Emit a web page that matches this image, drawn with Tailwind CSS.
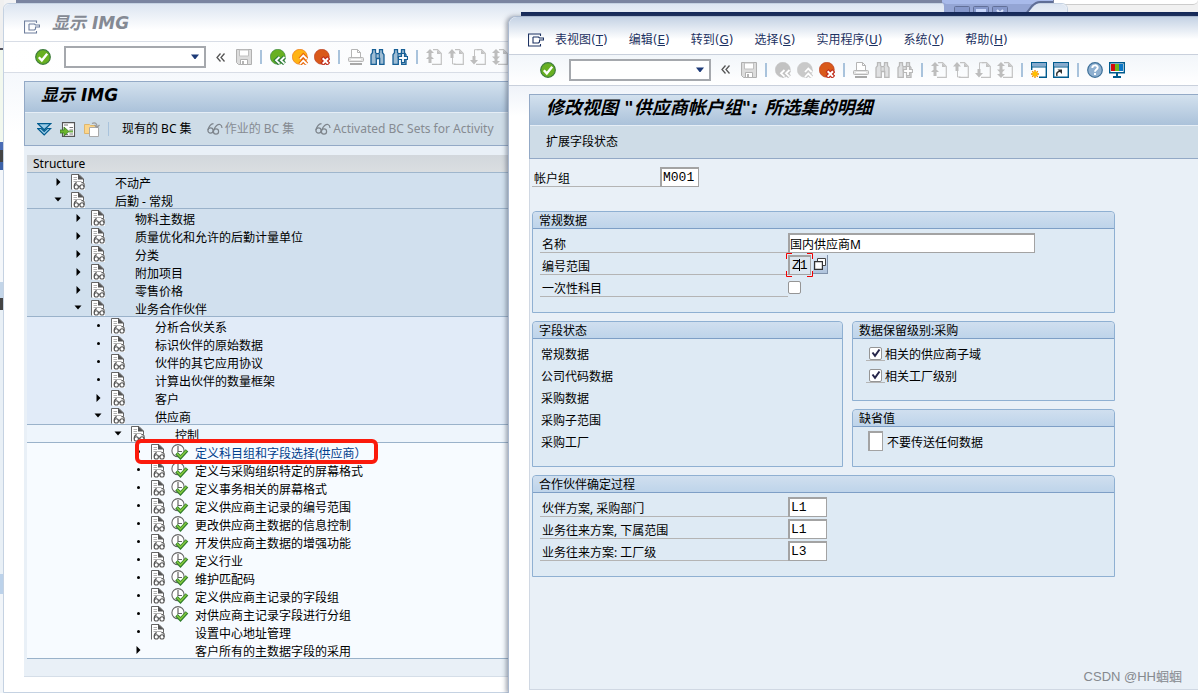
<!DOCTYPE html>
<html lang="zh-CN">
<head>
<meta charset="utf-8">
<meta name="viewport" content="width=device-width, initial-scale=1">
<title>显示 IMG</title>
<script src="https://cdn.jsdelivr.net/npm/@tailwindcss/browser@4"></script>
</head>
<body class="bg-[#f3f3f4] font-['Noto_Sans','Noto_Sans_CJK_SC',sans-serif] text-xs text-black">

<!-- Icon sprite -->
<svg class="hidden" aria-hidden="true">
  <symbol id="i-window" viewBox="0 0 16 14"><path d="M12.500 3V1H.5v12h12v-2M5 4h5.500l1 1H15.500v2H11M5 4v6h5.500l1-1V7.500" fill="none" stroke="currentColor" stroke-width="1.100"/></symbol>
  <symbol id="i-ok" viewBox="0 0 16 16"><circle cx="8" cy="8" r="7.300" fill="#68b021" stroke="#3d7c3c" stroke-width="1.200"/><path d="M3.800 8.200l3 3.200 5.400-6.600" fill="none" stroke="#fff" stroke-width="2.400"/></symbol>
  <symbol id="i-save" viewBox="0 0 16 16"><path d="M.5.5h15v15h-13l-2-2z" fill="#dcdcdc" stroke="#b0b0b0"/><path d="M3.500 1h9v6h-9z" fill="#fff" stroke="#c0c0c0"/><path d="M4.500 10.500h7v5h-7z" fill="#fff" stroke="#b0b0b0"/><path d="M6 12h2v3H6z" fill="#b5b5b5"/></symbol>
  <symbol id="i-back" viewBox="0 0 16 16"><circle cx="7.800" cy="7.800" r="7.500" fill="var(--face,currentColor)" stroke="currentColor" stroke-width=".6"/><path d="M9.500 8L6 11.300 9.500 14.700M14.500 8L11 11.300 14.500 14.700" fill="none" stroke="currentColor" stroke-width="4"/><path d="M9.500 8L6 11.300 9.500 14.700M14.500 8L11 11.300 14.500 14.700" fill="none" stroke="#fff" stroke-width="1.800"/></symbol>
  <symbol id="i-up" viewBox="0 0 16 16"><circle cx="7.800" cy="7.800" r="7.500" fill="currentColor" stroke="var(--rim,currentColor)" stroke-width=".6"/><path d="M8 10l3.300-3.500L14.700 10M8 15l3.300-3.500L14.700 15" fill="none" stroke="var(--rim,currentColor)" stroke-width="4"/><path d="M8 10l3.300-3.500L14.700 10M8 15l3.300-3.500L14.700 15" fill="none" stroke="#fff" stroke-width="1.800"/></symbol>
  <symbol id="i-exit" viewBox="0 0 16 16"><circle cx="7.800" cy="7.800" r="7.500" fill="#d9591a" stroke="#b5381c" stroke-width=".6"/><path d="M8 8.500l6.800 6.800M14.800 8.500L8 15.300" stroke="#c02d1c" stroke-width="4.400"/><path d="M8.700 9.300l5.300 5.300M14 9.300l-5.300 5.300" stroke="#fff" stroke-width="2"/></symbol>
  <symbol id="i-print" viewBox="0 0 16 16"><path d="M3.500 8V.500h6l3 3V8" fill="#fff" stroke="#b5b5b5"/><path d="M9.500.500v3h3" fill="none" stroke="#b5b5b5"/><rect x=".5" y="8.500" width="15" height="4" rx="1" fill="#e4e4e4" stroke="#b5b5b5"/><path d="M3 10.500h10" stroke="#fff"/><path d="M2 15h12" stroke="#a8a8a8" stroke-width="2"/></symbol>
  <symbol id="i-find" viewBox="0 0 16 16"><path d="M2.500.7h3v3l1 1h2l1-1v-3h3v3l1.500 2v9.600H9.700V9.500h-3.400v5.800H1V5.700l1.500-2z" fill="currentColor" fill-opacity=".4" stroke="currentColor" stroke-width="1.300"/><path d="M6 5v4M9.300 5v4" stroke="currentColor"/></symbol>
  <symbol id="i-findnext" viewBox="0 0 16 16"><use href="#i-find"/><path d="M9.500 4.500h3v3h3v3h-3v3h-3v-3h-3v-3h3z" fill="#fff" stroke="currentColor" stroke-width="1.200"/></symbol>
  <symbol id="i-page" viewBox="0 0 16 16"><path d="M7 .7h4.500L15.300 4.500v10.800H6" fill="none" stroke="#c2c2c2" stroke-width="1.200"/><path d="M11 1v4h4z" fill="#c2c2c2"/></symbol>
  <symbol id="i-first" viewBox="0 0 16 16"><use href="#i-page"/><path d="M4 0l4 4H5.500v3H2.500V4H0zM4 6l4 4H5.500v4H2.500v-4H0z" fill="#bdbdbd"/></symbol>
  <symbol id="i-prev" viewBox="0 0 16 16"><use href="#i-page"/><path d="M4 0l4 4.500H5.500V9h-3V4.500H0z" fill="#bdbdbd"/><path d="M4.500 9v6h3" fill="none" stroke="#c2c2c2"/></symbol>
  <symbol id="i-next" viewBox="0 0 16 16"><use href="#i-page"/><path d="M4.500 7V.700h4" fill="none" stroke="#c2c2c2"/><path d="M2.500 7h3v4H8l-4 4.500L0 11h2.500z" fill="#bdbdbd"/></symbol>
  <symbol id="i-last" viewBox="0 0 16 16"><use href="#i-page"/><path d="M4 0l4 4H5.500v3.500H8l-4 4 -4-4h2.500V4H0zM2.500 9h3v3H8l-4 4-4-4h2.500z" fill="#bdbdbd"/></symbol>
  <symbol id="i-newsession" viewBox="0 0 16 16"><path d="M.7.7h14.600v14.600H.7z" fill="#fff" stroke="#005b8e" stroke-width="1.400"/><path d="M1 1h14v3.500H1z" fill="#86aacd"/><path d="M1 5h14" stroke="#005b8e"/><path d="M0 8h8v8H0z" fill="#fff"/><path d="M4 8v8M0 12h8M1.200 9.200l5.600 5.600M6.800 9.200l-5.600 5.600" stroke="#f08c00" stroke-width="1.300"/><circle cx="4" cy="12" r="2.400" fill="#ffc000"/></symbol>
  <symbol id="i-shortcut" viewBox="0 0 16 16"><path d="M.7.7h14.600v14.600H.7z" fill="#fff" stroke="#005b8e" stroke-width="1.400"/><path d="M1 1h14v3.500H1z" fill="#86aacd"/><path d="M1 5h14" stroke="#005b8e"/><path d="M4 14c-1-3 .5-4.500 3.500-5" fill="none" stroke="#333" stroke-width="1.500"/><path d="M4.500 7.500H9V12z" fill="#333"/></symbol>
  <symbol id="i-help" viewBox="0 0 16 16"><circle cx="8" cy="8" r="7.300" fill="#8fb0d0" stroke="#3d7099" stroke-width="1.200"/><path d="M5.300 6c0-3.600 5.400-3.400 5.400-.4 0 2-2.700 2-2.700 4.200M8 11v2" fill="none" stroke="#fff" stroke-width="1.900"/></symbol>
  <symbol id="i-layout" viewBox="0 0 16 16"><path d="M.7.7h14.600v10H.7z" fill="#fff" stroke="#005b8e" stroke-width="1.400"/><path d="M2 2h4v7H2z" fill="#d40a0a"/><path d="M6 2h4v7H6z" fill="#6fb61c"/><path d="M10 2h4v7h-4z" fill="#0b78c8"/><path d="M8 11v4M4 15h8" stroke="#005b8e" stroke-width="2"/></symbol>
  <symbol id="i-expand" viewBox="0 0 15 13"><path d="M.7 5.500h3.500l3 3 3-3h3.500L7.200 12z" fill="#9acbe6" stroke="#005b8e" stroke-width="1.200"/><path d="M.8.700h12.900L7.200 6.800z" fill="#9acbe6" stroke="#005b8e" stroke-width="1.200"/></symbol>
  <symbol id="i-position" viewBox="0 0 16 15"><path d="M2.500.600h12v13.800h-12z" fill="#fff" stroke="#555" stroke-width="1.100"/><path d="M4 3h4M4 12.500h4M9.500 5.500h3.500M9.500 8h3.500M9.500 12h3.500" stroke="#777"/><path d="M9 9.500h4" stroke="#70b04a" stroke-width="2"/><path d="M0 8h4V5l5 4.500L4 14v-3H0z" fill="#6bb52a" stroke="#397a24" stroke-width=".8"/></symbol>
  <symbol id="i-copy" viewBox="0 0 16 15"><path d="M.5 2.500h5l1 1h5v8H.5z" fill="#fbd58a" stroke="#dfb66c"/><path d="M5.500 5.500h9v9h-9z" fill="#fff" stroke="#aaa"/><path d="M8 1.500c3-1.500 5 0 5 3M10.500 3l2.500 2.500L15.500 3" fill="none" stroke="#999" stroke-width="1.200"/></symbol>
  <symbol id="i-glasses" viewBox="0 0 16 12"><g fill="none" stroke="#7d848b" stroke-width="1.200"><circle cx="3.500" cy="7.500" r="2.600"/><circle cx="9" cy="8.500" r="2.600"/><path d="M1 7C2 3 4 1 6.500.700M7 7C8 3 11 1 13 1.500c1.500.500 2 2 2 3.500M6 7.500l1 .5"/></g></symbol>
  <symbol id="i-doc" viewBox="0 0 14 16"><path d="M.5 15.500V.500H8L12.500 5v6" fill="#fff" stroke="#666"/><path d="M7 0v5.500h6z" fill="#555"/><path d="M2.500 3.500h3.500M2.500 5.500h3.500M2.500 7.500h8" stroke="#b0b0b0"/><path d="M2 8.500h12V16H2z" fill="#fff"/><g fill="none" stroke="#555" stroke-width="1.100"><circle cx="5.300" cy="12.900" r="2.100"/><circle cx="11" cy="12.900" r="2.100"/><path d="M3.200 12.500c0-2.500.800-3.500 2.600-3.900M7.400 12.400h1.500M13.100 12.900v-3c-.3-1.100-1.500-1.400-2.800-1.100"/></g></symbol>
  <symbol id="i-exec" viewBox="0 0 18 16"><circle cx="7" cy="6.700" r="6.100" fill="#fff" stroke="#666" stroke-width="1.100"/><path d="M7 2v5.500h4" fill="none" stroke="#666" stroke-width="1.200"/><path d="M5.500 9.200l4 4.200 6.500-7" fill="none" stroke="#2f7d2c" stroke-width="3.500"/><path d="M6 9.600l3.500 3.500 6-6.600" fill="none" stroke="#83c83c" stroke-width="1.500"/></symbol>
  <symbol id="i-right" viewBox="0 0 14 14"><path d="M5.500 3L9.500 7l-4 4z"/></symbol>
  <symbol id="i-down" viewBox="0 0 14 14"><path d="M3.500 4.500h7L7 8.500z"/></symbol>
  <symbol id="i-dot" viewBox="0 0 14 14"><circle cx="7.500" cy="6.500" r="1.500"/></symbol>
  <symbol id="i-caret" viewBox="0 0 10 6"><path d="M1 .500h8L5.500 5h-1z" fill="#1d3a78"/></symbol>
  <symbol id="i-collapse" viewBox="0 0 10 9"><path d="M4.500.500L1 4.500l3.500 4M8.500.500L5 4.500l3.500 4" fill="none" stroke="#555" stroke-width="1.300"/></symbol>
  <symbol id="i-values" viewBox="0 0 12 12"><path d="M3.500.500h8v7h-8z" fill="#fff" stroke="#444"/><path d="M.6 3.600h7.800v7.800H.600z" fill="#fff" stroke="#333" stroke-width="1.200"/></symbol>
  <symbol id="i-tick" viewBox="0 0 12 12"><path d="M2.500 5.500L5 8.800 9.500 2.500" fill="none" stroke="#26264a" stroke-width="2"/></symbol>
</svg>

<div class="relative min-h-screen overflow-hidden">

  <!-- Desktop behind both windows -->
  <div class="absolute inset-y-0 left-0 flex w-1 flex-col bg-[#f1f5f9]">
    <span class="h-12 bg-[#f0f0f0]"></span><span class="h-0.5 bg-[#55555f]"></span><span class="h-23 bg-[#f2f8ee]"></span><span class="h-2 bg-[#4a6cb5]"></span><span class="h-3 bg-[#444]"></span><span class="h-2 bg-[#3d62a8]"></span><span class="h-28 bg-[#f4f7fa]"></span><span class="h-4 bg-[#c3d5e8]"></span><span class="h-3 bg-[#444]"></span><span class="h-66 bg-[#e9f0f6]"></span><span class="h-5 bg-[#bcd2ea]"></span>
  </div>
  <div class="absolute left-4 right-36 top-0 h-[3px] bg-[#7a84a0]"></div>
  <div class="absolute right-0 top-0 h-4 w-36 bg-[#f1f1f1]"></div>
  <div class="absolute right-0 top-0 h-[5px] w-36 rounded-br-full border-b border-[#ccc] bg-white"></div>

  <!-- Window: 显示 IMG -->
  <main class="absolute bottom-0 left-[3px] right-[130px] top-[3px] rounded-t-md border border-[#c5d2e2] bg-white">
    <header class="flex h-[38px] items-center gap-3 rounded-t-md border-b border-[#d8dde6] bg-linear-to-b from-[#dce5f1] to-white to-70% pl-5 text-[#858a94]">
      <svg class="mt-2 h-3.5 w-4 text-[#6f7f9d]"><use href="#i-window"/></svg>
      <h1 class="font-['DejaVu_Sans','Noto_Sans_CJK_SC',sans-serif] text-[17px] font-bold italic leading-5">显示 IMG</h1>
    </header>

    <div class="flex h-[31px] items-center gap-1.5 border-b border-[#d8dde6] bg-linear-to-r from-white to-[#f4f7fb] pl-[31px]">
      <button aria-label="确认" class="mr-[7px] size-4"><svg class="size-4"><use href="#i-ok"/></svg></button>
      <div class="flex h-[22px] w-[142px] items-center border-2 border-[#a5a8ad] bg-white pr-1">
        <input aria-label="命令" class="min-w-0 flex-1 px-1 outline-none"><button aria-label="历史命令"><svg class="h-1.5 w-2.5"><use href="#i-caret"/></svg></button>
      </div>
      <button aria-label="折叠" class="mx-1 h-[9px] w-2.5"><svg class="h-[9px] w-2.5"><use href="#i-collapse"/></svg></button>
      <button aria-label="保存" class="size-4"><svg class="size-4"><use href="#i-save"/></svg></button>
      <span class="mx-0.5 h-3.5 w-0.5 bg-[#a9c3dc]"></span>
      <button aria-label="返回" class="size-4 text-[#2f7d3c] [--face:#68b021]"><svg class="size-4"><use href="#i-back"/></svg></button>
      <button aria-label="退出" class="size-4 text-[#ffb415] [--rim:#e8690b]"><svg class="size-4"><use href="#i-up"/></svg></button>
      <button aria-label="取消" class="size-4"><svg class="size-4"><use href="#i-exit"/></svg></button>
      <span class="mx-0.5 h-3.5 w-0.5 bg-[#a9c3dc]"></span>
      <button aria-label="打印" class="size-4"><svg class="size-4"><use href="#i-print"/></svg></button>
      <button aria-label="查找" class="size-4 text-[#175f95]"><svg class="size-4"><use href="#i-find"/></svg></button>
      <button aria-label="继续查找" class="size-4 text-[#175f95]"><svg class="size-4"><use href="#i-findnext"/></svg></button>
      <span class="mx-0.5 h-3.5 w-0.5 bg-[#a9c3dc]"></span>
      <button aria-label="首页" class="size-4"><svg class="size-4"><use href="#i-first"/></svg></button>
      <button aria-label="上一页" class="size-4"><svg class="size-4"><use href="#i-prev"/></svg></button>
      <button aria-label="下一页" class="size-4"><svg class="size-4"><use href="#i-next"/></svg></button>
      <button aria-label="末页" class="size-4"><svg class="size-4"><use href="#i-last"/></svg></button>
    </div>

    <div class="bg-linear-to-b from-[#f5f8fc] to-white to-10% pl-5 pt-2">
      <div class="border border-[#93a9c6]">
        <h2 class="h-[31px] border-b border-[#e6eef6] bg-linear-to-b from-[#d3e1ee] to-[#abc2da] pl-4 font-['DejaVu_Sans','Noto_Sans_CJK_SC',sans-serif] text-[17px] font-bold italic leading-[26px]">显示 IMG</h2>
        <div class="flex h-8 items-center bg-[#cedce7] pl-3 text-[#868b92]">
          <button aria-label="全部展开"><svg class="mr-2 h-[13px] w-[15px]"><use href="#i-expand"/></svg></button>
          <button aria-label="定位"><svg class="mr-2 h-[15px] w-4"><use href="#i-position"/></svg></button>
          <button aria-label="复制"><svg class="mr-2 h-[15px] w-4"><use href="#i-copy"/></svg></button>
          <span class="mr-[13px] h-3.5 w-px bg-[#a9c3dc]"></span>
          <button class="mr-[15px] text-black">现有的 BC 集</button>
          <button class="mr-[21px] flex items-center gap-0.5"><svg class="h-3 w-4"><use href="#i-glasses"/></svg>作业的 BC 集</button>
          <button class="flex items-center gap-0.5"><svg class="h-3 w-4"><use href="#i-glasses"/></svg>Activated BC Sets for Activity</button>
        </div>
      </div>

      <div class="border-b border-[#d5dee8] bg-[#e9f0f7] pb-[17px] pl-[3px] pt-[9px]">
        <h3 class="h-[18px] border-b border-[#9fb6cc] bg-linear-to-b from-[#d2d7dc] to-[#dadee1] pl-1.5 leading-[17px]">Structure</h3>
        <ul class="border-b border-[#9ab2ca] bg-[#f7fbff] leading-[18px]">
          <li class="flex h-[18px] items-center gap-1.5 bg-[#d1e0ee] pl-6"><svg class="size-3.5"><use href="#i-right"/></svg><svg class="h-4 w-3.5"><use href="#i-doc"/></svg><span class="w-4.5"></span><span class="pt-1">不动产</span></li>
          <li class="flex h-[18px] items-center gap-1.5 border-b border-[#9ab2ca] bg-[#d1e0ee] pl-6"><svg class="size-3.5"><use href="#i-down"/></svg><svg class="h-4 w-3.5"><use href="#i-doc"/></svg><span class="w-4.5"></span><span class="pt-1">后勤 - 常规</span></li>
          <li class="flex h-[18px] items-center gap-1.5 bg-[#d1e0ee] pl-11"><svg class="size-3.5"><use href="#i-right"/></svg><svg class="h-4 w-3.5"><use href="#i-doc"/></svg><span class="w-4.5"></span><span class="pt-1">物料主数据</span></li>
          <li class="flex h-[18px] items-center gap-1.5 bg-[#d1e0ee] pl-11"><svg class="size-3.5"><use href="#i-right"/></svg><svg class="h-4 w-3.5"><use href="#i-doc"/></svg><span class="w-4.5"></span><span class="pt-1">质量优化和允许的后勤计量单位</span></li>
          <li class="flex h-[18px] items-center gap-1.5 bg-[#d1e0ee] pl-11"><svg class="size-3.5"><use href="#i-right"/></svg><svg class="h-4 w-3.5"><use href="#i-doc"/></svg><span class="w-4.5"></span><span class="pt-1">分类</span></li>
          <li class="flex h-[18px] items-center gap-1.5 bg-[#d1e0ee] pl-11"><svg class="size-3.5"><use href="#i-right"/></svg><svg class="h-4 w-3.5"><use href="#i-doc"/></svg><span class="w-4.5"></span><span class="pt-1">附加项目</span></li>
          <li class="flex h-[18px] items-center gap-1.5 bg-[#d1e0ee] pl-11"><svg class="size-3.5"><use href="#i-right"/></svg><svg class="h-4 w-3.5"><use href="#i-doc"/></svg><span class="w-4.5"></span><span class="pt-1">零售价格</span></li>
          <li class="flex h-[18px] items-center gap-1.5 border-b border-[#9ab2ca] bg-[#d1e0ee] pl-11"><svg class="size-3.5"><use href="#i-down"/></svg><svg class="h-4 w-3.5"><use href="#i-doc"/></svg><span class="w-4.5"></span><span class="pt-1">业务合作伙伴</span></li>
          <li class="flex h-[18px] items-center gap-1.5 bg-[#e1ebf8] pl-16"><svg class="size-3.5"><use href="#i-dot"/></svg><svg class="h-4 w-3.5"><use href="#i-doc"/></svg><span class="w-4.5"></span><span class="pt-1">分析合伙关系</span></li>
          <li class="flex h-[18px] items-center gap-1.5 bg-[#e1ebf8] pl-16"><svg class="size-3.5"><use href="#i-dot"/></svg><svg class="h-4 w-3.5"><use href="#i-doc"/></svg><span class="w-4.5"></span><span class="pt-1">标识伙伴的原始数据</span></li>
          <li class="flex h-[18px] items-center gap-1.5 bg-[#e1ebf8] pl-16"><svg class="size-3.5"><use href="#i-dot"/></svg><svg class="h-4 w-3.5"><use href="#i-doc"/></svg><span class="w-4.5"></span><span class="pt-1">伙伴的其它应用协议</span></li>
          <li class="flex h-[18px] items-center gap-1.5 bg-[#e1ebf8] pl-16"><svg class="size-3.5"><use href="#i-dot"/></svg><svg class="h-4 w-3.5"><use href="#i-doc"/></svg><span class="w-4.5"></span><span class="pt-1">计算出伙伴的数量框架</span></li>
          <li class="flex h-[18px] items-center gap-1.5 bg-[#e1ebf8] pl-16"><svg class="size-3.5"><use href="#i-right"/></svg><svg class="h-4 w-3.5"><use href="#i-doc"/></svg><span class="w-4.5"></span><span class="pt-1">客户</span></li>
          <li class="flex h-[18px] items-center gap-1.5 border-b border-[#9ab2ca] bg-[#e1ebf8] pl-16"><svg class="size-3.5"><use href="#i-down"/></svg><svg class="h-4 w-3.5"><use href="#i-doc"/></svg><span class="w-4.5"></span><span class="pt-1">供应商</span></li>
          <li class="flex h-[18px] items-center gap-1.5 overflow-hidden border-b border-[#9ab2ca] bg-[#eef5fc] pl-21"><svg class="size-3.5"><use href="#i-down"/></svg><svg class="h-4 w-3.5"><use href="#i-doc"/></svg><span class="w-4.5"></span><span class="pt-1">控制</span></li>
          <li class="relative flex h-[18px] items-center gap-1.5 pl-26"><svg class="size-3.5"><use href="#i-dot"/></svg><svg class="h-4 w-3.5"><use href="#i-doc"/></svg><svg class="h-4 w-4.5"><use href="#i-exec"/></svg><a href="#vendor-groups" class="pt-1 text-[#003e8c]">定义科目组和字段选择(供应商）</a><span class="absolute -top-1 left-[108px] h-[25px] w-[243px] rounded-md border-4 border-[#fb1a0c]"></span></li>
          <li class="flex h-[18px] items-center gap-1.5 pl-26"><svg class="size-3.5"><use href="#i-dot"/></svg><svg class="h-4 w-3.5"><use href="#i-doc"/></svg><svg class="h-4 w-4.5"><use href="#i-exec"/></svg><span class="pt-1">定义与采购组织特定的屏幕格式</span></li>
          <li class="flex h-[18px] items-center gap-1.5 pl-26"><svg class="size-3.5"><use href="#i-dot"/></svg><svg class="h-4 w-3.5"><use href="#i-doc"/></svg><svg class="h-4 w-4.5"><use href="#i-exec"/></svg><span class="pt-1">定义事务相关的屏幕格式</span></li>
          <li class="flex h-[18px] items-center gap-1.5 pl-26"><svg class="size-3.5"><use href="#i-dot"/></svg><svg class="h-4 w-3.5"><use href="#i-doc"/></svg><svg class="h-4 w-4.5"><use href="#i-exec"/></svg><span class="pt-1">定义供应商主记录的编号范围</span></li>
          <li class="flex h-[18px] items-center gap-1.5 pl-26"><svg class="size-3.5"><use href="#i-dot"/></svg><svg class="h-4 w-3.5"><use href="#i-doc"/></svg><svg class="h-4 w-4.5"><use href="#i-exec"/></svg><span class="pt-1">更改供应商主数据的信息控制</span></li>
          <li class="flex h-[18px] items-center gap-1.5 pl-26"><svg class="size-3.5"><use href="#i-dot"/></svg><svg class="h-4 w-3.5"><use href="#i-doc"/></svg><svg class="h-4 w-4.5"><use href="#i-exec"/></svg><span class="pt-1">开发供应商主数据的增强功能</span></li>
          <li class="flex h-[18px] items-center gap-1.5 pl-26"><svg class="size-3.5"><use href="#i-dot"/></svg><svg class="h-4 w-3.5"><use href="#i-doc"/></svg><svg class="h-4 w-4.5"><use href="#i-exec"/></svg><span class="pt-1">定义行业</span></li>
          <li class="flex h-[18px] items-center gap-1.5 pl-26"><svg class="size-3.5"><use href="#i-dot"/></svg><svg class="h-4 w-3.5"><use href="#i-doc"/></svg><svg class="h-4 w-4.5"><use href="#i-exec"/></svg><span class="pt-1">维护匹配码</span></li>
          <li class="flex h-[18px] items-center gap-1.5 pl-26"><svg class="size-3.5"><use href="#i-dot"/></svg><svg class="h-4 w-3.5"><use href="#i-doc"/></svg><svg class="h-4 w-4.5"><use href="#i-exec"/></svg><span class="pt-1">定义供应商主记录的字段组</span></li>
          <li class="flex h-[18px] items-center gap-1.5 pl-26"><svg class="size-3.5"><use href="#i-dot"/></svg><svg class="h-4 w-3.5"><use href="#i-doc"/></svg><svg class="h-4 w-4.5"><use href="#i-exec"/></svg><span class="pt-1">对供应商主记录字段进行分组</span></li>
          <li class="flex h-[18px] items-center gap-1.5 pl-26"><svg class="size-3.5"><use href="#i-dot"/></svg><svg class="h-4 w-3.5"><use href="#i-doc"/></svg><span class="w-4.5"></span><span class="pt-1">设置中心地址管理</span></li>
          <li class="flex h-[17px] items-center gap-1.5 pl-26"><svg class="size-3.5"><use href="#i-right"/></svg><span class="w-3.5"></span><span class="w-4.5"></span><span class="pt-1">客户所有的主数据字段的采用</span></li>
        </ul>
      </div>
    </div>
  </main>

  <!-- Caption buttons of the rear window -->
  <svg class="absolute right-[130px] top-0 h-4 w-[126px]" viewBox="0 0 126 16">
    <path d="M0 0h111v2.500h-13Q94 3 90 8L83 16H2V6Q2 3 0 2.500z" fill="#94a5d4"/>
    <path d="M0 0h111v2h-14l-3 2H4L0 2z" fill="#a8baea"/>
    <path d="M83 15L90 6Q94 2 98 2H111" fill="none" stroke="#5f6e96" stroke-width="2"/>
    <g fill="#8698cb" stroke="#627099"><rect x="12.500" y="6.500" width="15" height="12" rx="1"/><rect x="31.500" y="6.500" width="15" height="12" rx="1"/><rect x="50.500" y="6.500" width="15" height="12" rx="1"/></g>
    <path d="M34 9h10v5H34z" fill="#c7d6fb"/><path d="M55 10l5 5M61 10l-5 5" stroke="#d8e2fb" stroke-width="2"/>
  </svg>
  <div class="absolute left-[521px] right-0 top-3 h-2 bg-[#15295a]"></div>

  <!-- Window: 修改视图 -->
  <section class="absolute bottom-0 left-[508px] right-0 top-4 rounded-tl-lg border-l border-t border-[#aab9cf] bg-white shadow-[-2px_0_4px_rgba(70,80,100,0.5)]">
    <nav class="flex h-[38px] items-center gap-[21px] rounded-tl-lg border-b border-[#c9d0dc] bg-linear-to-b from-[#c4d2e4] to-white to-60% pl-[19px] pt-2 font-['DejaVu_Sans','Noto_Sans_CJK_SC',sans-serif] text-[#1d3262]">
      <svg class="-mr-2.5 h-3.5 w-4"><use href="#i-window"/></svg>
      <button>表视图(<u>T</u>)</button>
      <button>编辑(<u>E</u>)</button>
      <button>转到(<u>G</u>)</button>
      <button>选择(<u>S</u>)</button>
      <button>实用程序(<u>U</u>)</button>
      <button>系统(<u>Y</u>)</button>
      <button>帮助(<u>H</u>)</button>
    </nav>

    <div class="flex h-[31px] items-center gap-1.5 border-b border-[#c9d0dc] bg-linear-to-b from-[#f2f6fa] to-white pb-px pl-[31px]">
      <button aria-label="确认" class="mr-[7px] size-4"><svg class="size-4"><use href="#i-ok"/></svg></button>
      <div class="flex h-[22px] w-[142px] items-center border-2 border-[#a5a8ad] bg-white pr-1">
        <input aria-label="命令" class="min-w-0 flex-1 px-1 outline-none"><button aria-label="历史命令"><svg class="h-1.5 w-2.5"><use href="#i-caret"/></svg></button>
      </div>
      <button aria-label="折叠" class="mx-1 h-[9px] w-2.5"><svg class="h-[9px] w-2.5"><use href="#i-collapse"/></svg></button>
      <button aria-label="保存" class="size-4"><svg class="size-4"><use href="#i-save"/></svg></button>
      <span class="mx-0.5 h-3.5 w-0.5 bg-[#a9c3dc]"></span>
      <button aria-label="返回" class="size-4 text-[#c2c2c2]"><svg class="size-4"><use href="#i-back"/></svg></button>
      <button aria-label="退出" class="size-4 text-[#c9c9c9]"><svg class="size-4"><use href="#i-up"/></svg></button>
      <button aria-label="取消" class="size-4"><svg class="size-4"><use href="#i-exit"/></svg></button>
      <span class="mx-0.5 h-3.5 w-0.5 bg-[#a9c3dc]"></span>
      <button aria-label="打印" class="size-4"><svg class="size-4"><use href="#i-print"/></svg></button>
      <button aria-label="查找" class="size-4 text-[#b9b9b9]"><svg class="size-4"><use href="#i-find"/></svg></button>
      <button aria-label="继续查找" class="size-4 text-[#b9b9b9]"><svg class="size-4"><use href="#i-findnext"/></svg></button>
      <span class="mx-0.5 h-3.5 w-0.5 bg-[#a9c3dc]"></span>
      <button aria-label="首页" class="size-4"><svg class="size-4"><use href="#i-first"/></svg></button>
      <button aria-label="上一页" class="size-4"><svg class="size-4"><use href="#i-prev"/></svg></button>
      <button aria-label="下一页" class="size-4"><svg class="size-4"><use href="#i-next"/></svg></button>
      <button aria-label="末页" class="size-4"><svg class="size-4"><use href="#i-last"/></svg></button>
      <span class="mx-0.5 h-3.5 w-0.5 bg-[#a9c3dc]"></span>
      <button aria-label="新建会话" class="size-4"><svg class="size-4"><use href="#i-newsession"/></svg></button>
      <button aria-label="创建快捷方式" class="size-4"><svg class="size-4"><use href="#i-shortcut"/></svg></button>
      <span class="mx-0.5 h-3.5 w-0.5 bg-[#a9c3dc]"></span>
      <button aria-label="帮助" class="size-4"><svg class="size-4"><use href="#i-help"/></svg></button>
      <button aria-label="定制布局" class="size-4"><svg class="size-4"><use href="#i-layout"/></svg></button>
    </div>

    <div class="flex h-[calc(100%-69px)] flex-col bg-linear-to-b from-[#eff3f9] to-white to-5% pb-[3px] pl-5 pt-2">
      <div class="border-y border-l border-[#93a9c6]">
        <h1 class="h-[31px] border-b border-[#e6eef6] bg-linear-to-b from-[#d3e1ee] to-[#abc2da] pl-4 font-['DejaVu_Sans','Noto_Sans_CJK_SC',sans-serif] text-lg font-bold italic leading-[26px]">修改视图 "供应商帐户组": 所选集的明细</h1>
        <div class="flex h-8 items-center bg-[#cedce7] pl-4"><button>扩展字段状态</button></div>
      </div>

      <form class="flex-1 border-b border-l border-[#d0d8e3] bg-[#e9f0f7] pl-0.5 pt-2">
        <div class="flex h-5">
          <label for="group" class="w-32 border-b border-[#b4b4b4] pl-0.5 leading-6">帐户组</label>
          <input id="group" value="M001" class="w-[39px] border-2 border-b border-r border-[#a3a3a3] bg-white px-px font-['Liberation_Mono',monospace] text-[13px] outline-none">
        </div>

        <div class="mt-6 flex w-[583px] max-w-full flex-col gap-2">
          <section class="rounded-t border border-[#8fb0d2] bg-[#deeaf4] pb-[15px]">
            <h2 class="h-[17px] rounded-t border-b border-[#7e9fc6] bg-linear-to-b from-[#d0dfef] to-[#bed4ea] pl-1.5 leading-[18px]">常规数据</h2>
            <div class="flex flex-col gap-0.5 pl-[7px] pt-1">
              <div class="flex h-5">
                <label for="name" class="w-[248px] border-b border-[#b4b4b4] pl-0.5 leading-6">名称</label>
                <input id="name" value="国内供应商M" class="w-[247px] border-2 border-b border-r border-[#a3a3a3] bg-white pt-0.5 outline-none">
              </div>
              <div class="flex h-5">
                <label for="range" class="w-[248px] border-b border-[#b4b4b4] pl-0.5 leading-6">编号范围</label>
                <div class="relative z-10">
                  <input id="range" value="Z1" class="h-5 w-[23px] border-2 border-b border-r border-[#a3a3a3] bg-[#dce6ef] px-0.5 font-['Liberation_Mono',monospace] text-[13px] outline-none">
                  <svg class="absolute -left-0.5 -top-0.5 h-6 w-[27px]" viewBox="0 0 27 24"><path d="M.500 6V.500H6M21 .500h5.500V6M.500 18v5.500H6M21 23.500h5.500V18" fill="none" stroke="#f00000"/><path d="M13.500 6v12" stroke="#000"/></svg>
                </div>
                <button type="button" aria-label="可能的条目" class="ml-0.5 flex h-[19px] w-[15px] items-center justify-center border-b border-r border-[#7f92ab] bg-linear-to-b from-[#dce6f2] to-[#aec3dc]"><svg class="size-3"><use href="#i-values"/></svg></button>
              </div>
              <div class="flex h-5 items-center">
                <label for="once" class="h-5 w-[248px] border-b border-[#b4b4b4] pl-0.5 leading-6">一次性科目</label>
                <input id="once" type="checkbox" class="size-[13px] appearance-none rounded-xs border border-[#959595] bg-white">
              </div>
            </div>
          </section>

          <div class="grid grid-cols-[311fr_263fr] gap-x-[9px]">
            <section class="rounded-t border border-[#8fb0d2] bg-[#deeaf4] pb-[15px]">
              <h2 class="h-[17px] rounded-t border-b border-[#7e9fc6] bg-linear-to-b from-[#d0dfef] to-[#bed4ea] pl-1.5 leading-[18px]">字段状态</h2>
              <ul class="flex flex-col gap-0.5 pl-2 pt-1 leading-6">
                <li class="h-5">常规数据</li><li class="h-5">公司代码数据</li><li class="h-5">采购数据</li><li class="h-5">采购子范围</li><li class="h-5">采购工厂</li>
              </ul>
            </section>
            <div class="flex flex-col gap-2">
              <section class="rounded-t border border-[#8fb0d2] bg-[#deeaf4] pb-[15px]">
                <h2 class="h-[17px] rounded-t border-b border-[#7e9fc6] bg-linear-to-b from-[#d0dfef] to-[#bed4ea] pl-1.5 leading-[18px]">数据保留级别:采购</h2>
                <div class="flex flex-col gap-0.5 pl-[13px] pt-1">
                  <label class="flex h-5 items-start leading-6"><span class="mt-1 grid w-[19px] justify-items-center border-b border-[#b4b4b4]"><input type="checkbox" checked class="col-start-1 row-start-1 size-[13px] appearance-none rounded-xs border border-[#959595] bg-white"><svg class="col-start-1 row-start-1 size-3"><use href="#i-tick"/></svg></span>相关的供应商子域</label>
                  <label class="flex h-5 items-start leading-6"><span class="mt-1 grid w-[19px] justify-items-center border-b border-[#b4b4b4]"><input type="checkbox" checked class="col-start-1 row-start-1 size-[13px] appearance-none rounded-xs border border-[#959595] bg-white"><svg class="col-start-1 row-start-1 size-3"><use href="#i-tick"/></svg></span>相关工厂级别</label>
                </div>
              </section>
              <section class="rounded-t border border-[#8fb0d2] bg-[#deeaf4] pb-[15px]">
                <h2 class="h-[17px] rounded-t border-b border-[#7e9fc6] bg-linear-to-b from-[#d0dfef] to-[#bed4ea] pl-1.5 leading-[18px]">缺省值</h2>
                <div class="flex h-6 gap-1 pl-[15px] pt-1 leading-6">
                  <input id="nosend" class="h-5 w-[15px] border-2 border-b border-r border-[#a3a3a3] bg-white outline-none"><label for="nosend">不要传送任何数据</label>
                </div>
              </section>
            </div>
          </div>

          <section class="rounded-t border border-[#8fb0d2] bg-[#deeaf4] pb-[15px]">
            <h2 class="h-[17px] rounded-t border-b border-[#7e9fc6] bg-linear-to-b from-[#d0dfef] to-[#bed4ea] pl-1.5 leading-[18px]">合作伙伴确定过程</h2>
            <div class="flex flex-col gap-0.5 pl-[7px] pt-1">
              <div class="flex h-5"><label for="p1" class="w-[248px] border-b border-[#b4b4b4] pl-0.5 leading-6">伙伴方案, 采购部门</label><input id="p1" value="L1" class="w-[39px] border-2 border-b border-r border-[#a3a3a3] bg-white px-px font-['Liberation_Mono',monospace] text-[13px] outline-none"></div>
              <div class="flex h-5"><label for="p2" class="w-[248px] border-b border-[#b4b4b4] pl-0.5 leading-6">业务往来方案, 下属范围</label><input id="p2" value="L1" class="w-[39px] border-2 border-b border-r border-[#a3a3a3] bg-white px-px font-['Liberation_Mono',monospace] text-[13px] outline-none"></div>
              <div class="flex h-5"><label for="p3" class="w-[248px] border-b border-[#b4b4b4] pl-0.5 leading-6">业务往来方案: 工厂级</label><input id="p3" value="L3" class="w-[39px] border-2 border-b border-r border-[#a3a3a3] bg-white px-px font-['Liberation_Mono',monospace] text-[13px] outline-none"></div>
            </div>
          </section>
        </div>
      </form>
    </div>
  </section>

  <p class="absolute bottom-1.5 right-4 font-['Liberation_Sans','Noto_Sans_CJK_SC',sans-serif] text-[13px] leading-5 text-[#85898e]">CSDN @HH蝈蝈</p>
</div>
</body>
</html>
